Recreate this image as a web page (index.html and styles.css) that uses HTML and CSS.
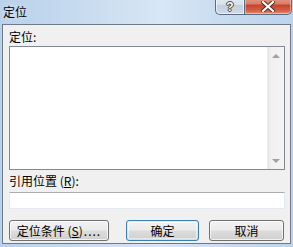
FILE: index.html
```html
<!DOCTYPE html>
<html>
<head>
<meta charset="utf-8">
<link rel="stylesheet" href="styles.css">
</head>
<body>
<div class="window">
  <div class="titlebar">
    <span class="title">定位</span>
    <div class="caption-buttons">
      <div class="cap help"><span>?</span></div>
      <div class="cap close">
        <svg width="14" height="11" viewBox="0 0 14 11"><path d="M2 1 L12 10 M12 1 L2 10" stroke="#4a2a2a" stroke-width="4" stroke-linecap="square"/><path d="M2 1 L12 10 M12 1 L2 10" stroke="#fff" stroke-width="2.2" stroke-linecap="square"/></svg>
      </div>
    </div>
  </div>
  <div class="client">
    <div class="label">定位:</div>
    <div class="listbox">
      <div class="list-area"></div>
      <div class="scrollbar">
        <div class="arrow up"></div>
        <div class="track"></div>
        <div class="arrow down"></div>
      </div>
    </div>
    <div class="label ref">引用位置 (<u>R</u>):</div>
    <div class="input"></div>
    <div class="buttons">
      <div class="btn special">定位条件 (<u>S</u>)<span class="dots">....</span></div>
      <div class="spacer"></div>
      <div class="btn default">确定</div>
      <div class="btn cancel">取消</div>
    </div>
  </div>
</div>
</body>
</html>
```
FILE: styles.css
```css
* { box-sizing: border-box; }
html, body { margin: 0; padding: 0; }
body {
  width: 293px;
  height: 247px;
  overflow: hidden;
  font-family: "Noto Sans CJK SC", "Liberation Sans", sans-serif;
  font-size: 12px;
  color: #000;
}
.window {
  width: 293px;
  height: 247px;
  background: linear-gradient(90deg, #b9d1ea 0%, #c9dcf0 30%, #d8e6f5 55%, #c6daef 80%, #bcd3ea 100%);
  display: flex;
  flex-direction: column;
  padding: 0 2px 3px 2px;
}
.titlebar {
  height: 24px;
  display: flex;
  align-items: flex-start;
  position: relative;
}
.title {
  margin-left: 1px;
  margin-top: 4px;
  font-size: 12px;
  line-height: 16px;
  color: #000;
  text-shadow: 0 0 6px rgba(255,255,255,0.9);
}
.caption-buttons {
  position: absolute;
  right: -1px;
  top: -5px;
  display: flex;
}
.cap {
  height: 20px;
  border: 1px solid #5b6d84;
  border-top: none;
  display: flex;
  align-items: flex-end;
  justify-content: center;
  padding-bottom: 1px;
}
.help {
  width: 29px;
  border-right: none;
  border-radius: 0 0 0 5px;
  background: linear-gradient(180deg, #e6eef7 0%, #d7e2ee 50%, #c2d0df 55%, #cfdbe8 100%);
  box-shadow: inset 0 0 0 1px rgba(255,255,255,0.6);
}
.help span {
  font-family: "Liberation Sans", sans-serif;
  font-weight: bold;
  font-size: 12px;
  line-height: 12px;
  color: #fff;
  text-shadow: 0 0 1px #333, 0 0 1px #333, 1px 0 0 #555, -1px 0 0 #555, 0 1px 0 #555, 0 -1px 0 #555;
}
.close {
  width: 48px;
  border-radius: 0 0 5px 0;
  background: linear-gradient(180deg, #e8a493 0%, #d9806a 45%, #c7452a 55%, #d5634a 85%, #e79a7e 100%);
  box-shadow: inset 0 0 0 1px rgba(255,220,200,0.5);
  padding-bottom: 2px;
}
.client {
  flex: 1;
  background: #f0f0f0;
  border: 1px solid #6d7a8a;
  padding: 4px 5px 0 6px;
  display: flex;
  flex-direction: column;
}
.label {
  line-height: 16px;
  height: 17px;
  white-space: nowrap;
}
.label u { text-decoration: underline; }
.listbox {
  height: 124px;
  border: 1px solid #828790;
  background: #fff;
  display: flex;
}
.list-area { flex: 1; }
.scrollbar {
  width: 17px;
  background: linear-gradient(90deg, #e6e6e6 0%, #f0f0f0 20%, #f4f4f4 100%);
  border-left: 1px solid #ececec;
  display: flex;
  flex-direction: column;
}
.track { flex: 1; }
.arrow {
  height: 17px;
  position: relative;
}
.arrow::after {
  content: "";
  position: absolute;
  left: 4px;
  border-left: 4px solid transparent;
  border-right: 4px solid transparent;
}
.arrow.up::after {
  top: 7px;
  border-bottom: 4px solid #a0a0a0;
}
.arrow.down::after {
  top: 7px;
  border-top: 4px solid #a0a0a0;
}
.label.ref {
  margin-top: 3px;
  height: 19px;
}
.input {
  height: 17px;
  border: 1px solid #e3e9ef;
  border-top-color: #abadb3;
  background: #fff;
}
.buttons {
  margin-top: 11px;
  display: flex;
  padding-right: 1px;
}
.spacer { flex: 1; }
.btn {
  height: 21px;
  border: 1px solid #707070;
  border-radius: 3px;
  background: linear-gradient(180deg, #f2f2f2 0%, #ebebeb 48%, #dddddd 52%, #cfcfcf 100%);
  box-shadow: inset 0 0 0 1px rgba(255,255,255,0.7);
  display: flex;
  align-items: center;
  justify-content: center;
  line-height: 16px;
  white-space: nowrap;
}
.btn.special { width: 100px; }
.dots { letter-spacing: 1px; margin-left: 1px; }
.btn.default {
  width: 73px;
  margin-right: 1px;
  border-color: #3c7fb1;
  box-shadow: inset 0 0 0 1px #48d9ff33, inset 0 0 0 2px rgba(255,255,255,0.5);
}
.btn.cancel {
  width: 75px;
  margin-left: 9px;
}
```
